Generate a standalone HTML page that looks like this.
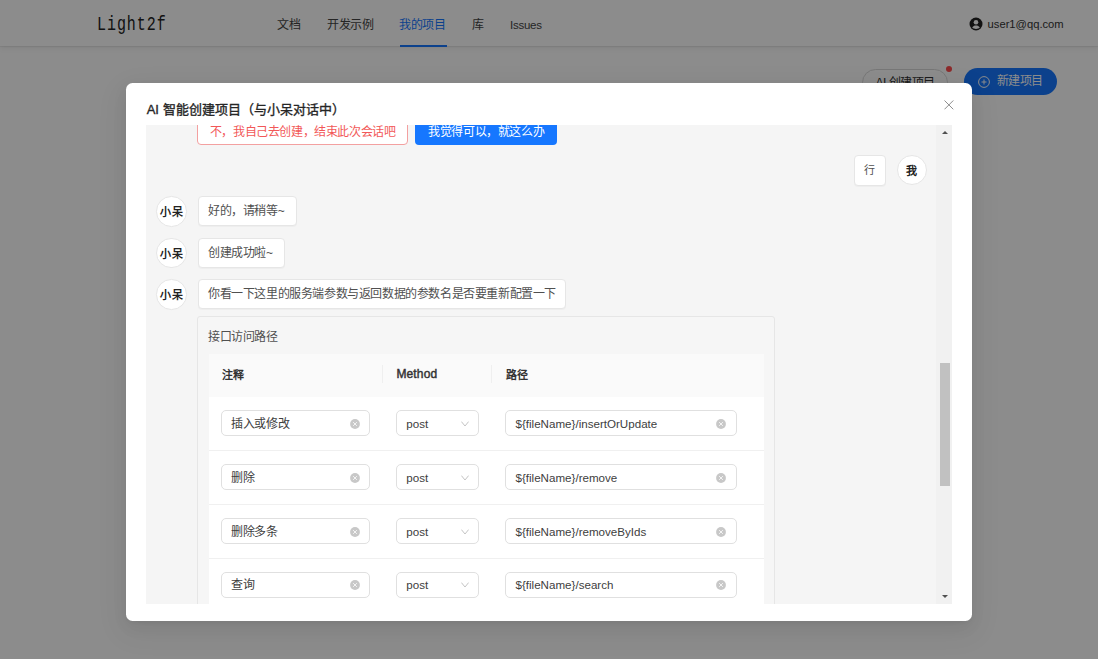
<!DOCTYPE html>
<html lang="zh-CN"><head><meta charset="utf-8">
<style>
*{box-sizing:border-box;margin:0;padding:0}
html,body{width:1098px;height:659px;overflow:hidden}
body{font-family:"Liberation Sans",sans-serif;font-size:12px;color:#333;background:#fff;position:relative}
.abs{position:absolute}
.hdr{left:0;top:0;width:1098px;height:46px;background:#fff;box-shadow:0 1px 1px rgba(0,0,0,0.06),0 2px 6px rgba(0,0,0,0.08)}
.logo{left:97px;top:12px;font-family:"Liberation Mono",monospace;font-size:15px;letter-spacing:0.95px;color:#222;line-height:20px;transform:scaleY(1.36);transform-origin:0 0}
.nav{top:17px;font-size:12px;letter-spacing:-0.4px;line-height:16px;color:#444;white-space:nowrap}
.nav.act{color:#1677ff}
.uline{left:399.6px;top:45.2px;width:47px;height:2px;background:#1677ff}
.user{left:987.6px;top:16px;font-size:11.2px;line-height:16px;color:#333}
.btn-ai{left:862px;top:68.5px;width:86px;height:27px;border:1px solid #d9d9d9;border-radius:14px;background:#fff;font-size:12px;letter-spacing:-0.5px;line-height:26px;text-align:center;color:#333}
.dot{left:946px;top:65.5px;width:6px;height:6px;border-radius:50%;background:#ff4d4f}
.btn-new{left:964px;top:68px;width:92.5px;height:27px;border-radius:14px;background:#1677ff;color:#fff;font-size:12px;line-height:27px}
.mask{left:0;top:0;width:1098px;height:659px;background:rgba(0,0,0,0.45)}
.modal{left:126.2px;top:82.5px;width:845.6px;height:538.4px;background:#fff;border-radius:6.5px;box-shadow:0 6px 16px rgba(0,0,0,0.06),0 3px 6px -4px rgba(0,0,0,0.08),0 9px 28px 8px rgba(0,0,0,0.04)}
.title{left:20.5px;top:17px;font-size:13px;font-weight:normal;-webkit-text-stroke:0.35px #262626;color:#262626;line-height:20px;white-space:nowrap}
.close{left:817.6px;top:17.3px;width:9.8px;height:9.8px}
.body{left:19.8px;top:42.5px;width:806px;height:479px;background:#f5f5f5;overflow:hidden}
.bubble{background:#fff;border:1px solid #e6e6e6;box-shadow:0 1px 1px rgba(0,0,0,0.03);border-radius:4px;font-size:12px;letter-spacing:-0.4px;line-height:28px;padding:0 0 0 9.5px;white-space:nowrap;color:#505050}
.av{background:#fff;border:1px solid #e6e6e6;border-radius:50%;font-weight:bold;font-size:12px;letter-spacing:-0.4px;text-align:center;color:#222;white-space:nowrap}
.btn-red{background:#fff;border:1px solid #f3a0a0;border-radius:4px;color:#f25858;font-size:12px;letter-spacing:-0.4px;line-height:27px;padding-top:0;text-align:center;white-space:nowrap}
.btn-blue{background:#1677ff;border-radius:4px;color:#fff;font-size:12px;letter-spacing:-0.4px;line-height:28px;text-align:center;white-space:nowrap}
.card{background:#f6f6f6;border:1px solid #e6e6e6;border-radius:3px}
.ctitle{font-size:12px;letter-spacing:-0.4px;line-height:16px;color:#505050;white-space:nowrap}
.thead{background:#fafafa}
.th{font-size:12px;letter-spacing:-0.4px;font-weight:bold;line-height:16px;color:#333;white-space:nowrap}
.trow{background:#fff;border-bottom:1px solid #f0f0f0}
.inp{background:#fff;border:1px solid #e0e0e0;border-radius:5px}
.itx{position:absolute;left:9px;top:4.5px;font-size:11.6px;line-height:16px;color:#404040;white-space:nowrap}
.clr{position:absolute;top:7.6px;width:10px;height:10px;line-height:0}
.arr{position:absolute;top:9.6px;width:8px;height:6px;line-height:0}
.cj{font-size:12px;letter-spacing:-0.4px}
.lat{font-size:12px;letter-spacing:0.15px;font-weight:normal;-webkit-text-stroke:0.45px #333}
</style></head><body>
<div class="abs hdr"></div>
<div class="abs logo">Light2f</div>
<div class="abs nav" style="left:277px">文档</div>
<div class="abs nav" style="left:327px">开发示例</div>
<div class="abs nav act" style="left:399px">我的项目</div>
<div class="abs nav" style="left:472px">库</div>
<div class="abs nav" style="left:510px;font-size:11.5px;letter-spacing:-0.25px">Issues</div>
<div class="abs uline"></div>
<svg class="abs" style="left:968.5px;top:16.5px" width="14" height="14" viewBox="0 0 14 14"><circle cx="7" cy="7" r="6.5" fill="#222"/><circle cx="7" cy="5.2" r="2.3" fill="#fff"/><path d="M3.2 10.6C4 9 5.4 8.4 7 8.4S10 9 10.8 10.6C9.8 11.6 8.5 12 7 12S4.2 11.6 3.2 10.6Z" fill="#fff"/></svg>
<div class="abs user">user1@qq.com</div>
<div class="abs btn-ai">AI 创建项目</div>
<div class="abs dot"></div>
<div class="abs btn-new"><svg class="abs" style="left:14px;top:7.5px" width="12" height="12" viewBox="0 0 12 12"><circle cx="6" cy="6" r="5.4" fill="none" stroke="#fff" stroke-width="1"/><path d="M6 3.5V8.5M3.5 6H8.5" stroke="#fff" stroke-width="1"/></svg><span class="abs" style="left:33px;top:0;letter-spacing:-0.6px">新建项目</span></div>

<div class="abs mask"></div>

<div class="abs modal">
  <div class="abs title">AI 智能创建项目（与小呆对话中）</div>
  <svg class="abs close" viewBox="0 0 10 10"><path d="M0.5 0.5L9.5 9.5M9.5 0.5L0.5 9.5" stroke="#8a8a8a" stroke-width="1"/></svg>
  <div class="abs body">
<div class="abs btn-red" style="left:51.3px;top:-7.5px;width:210.7px;height:27px">不，我自己去创建，结束此次会话吧</div>
<div class="abs btn-blue" style="left:269.4px;top:-7.5px;width:141.5px;height:27px">我觉得可以，就这么办</div>
<div class="abs bubble" style="left:708px;top:30px;width:32px;height:30.5px;padding:0;text-align:center;line-height:29.5px;font-size:11px;letter-spacing:0">行</div>
<div class="abs av" style="left:750.6px;top:29.7px;width:30.5px;height:30.5px;line-height:31.5px;font-size:11px;letter-spacing:0">我</div>
<div class="abs av" style="left:10.4px;top:71.4px;width:30.5px;height:30.5px;line-height:30px;font-size:11px;letter-spacing:0.4px;text-indent:0.4px">小呆</div>
<div class="abs bubble" style="left:51.6px;top:71.4px;width:99.5px;height:30px;line-height:29px">好的，请稍等~</div>
<div class="abs av" style="left:10.4px;top:112.7px;width:30.5px;height:30.5px;line-height:30px;font-size:11px;letter-spacing:0.4px;text-indent:0.4px">小呆</div>
<div class="abs bubble" style="left:51.6px;top:112.7px;width:87.6px;height:30px;line-height:29px">创建成功啦~</div>
<div class="abs av" style="left:10.4px;top:154.3px;width:30.5px;height:30.5px;line-height:30px;font-size:11px;letter-spacing:0.4px;text-indent:0.4px">小呆</div>
<div class="abs bubble" style="left:51.6px;top:154.3px;width:368.2px;height:30px;line-height:29px">你看一下这里的服务端参数与返回数据的参数名是否要重新配置一下</div>
<div class="abs card" style="left:51.4px;top:191.4px;width:578.1px;height:320px"></div>
<div class="abs ctitle" style="left:62px;top:203.5px">接口访问路径</div>
<div class="abs thead" style="left:62.6px;top:229px;width:555.7px;height:43.3px"></div>
<div class="abs th" style="left:76px;top:241.5px;font-size:11px;letter-spacing:0.4px">注释</div>
<div class="abs th lat" style="left:250.4px;top:240.8px">Method</div>
<div class="abs th" style="left:359.7px;top:241.5px;font-size:11px;letter-spacing:0.4px">路径</div>
<div class="abs" style="left:236.4px;top:240px;width:1px;height:18px;background:#efefef"></div>
<div class="abs" style="left:345px;top:240px;width:1px;height:18px;background:#efefef"></div>
<div class="abs trow" style="left:62.6px;top:272.3px;width:555.7px;height:53.85px"></div>
<div class="abs inp" style="left:75.2px;top:285.3px;width:149.0px;height:26.2px"><span class="itx cj">插入或修改</span><span class="clr" style="left:127.8px"><svg width="10" height="10" viewBox="0 0 10 10"><circle cx="5" cy="5" r="4.9" fill="#c8c8c8"/><path d="M3.4 3.4L6.6 6.6M6.6 3.4L3.4 6.6" stroke="#f4f4f4" stroke-width="1" stroke-linecap="round"/></svg></span></div>
<div class="abs inp" style="left:250.3px;top:285.3px;width:82.5px;height:26.2px"><span class="itx">post</span><span class="arr" style="left:63.7px"><svg width="8" height="6" viewBox="0 0 8 6"><path d="M0.4 0.6L4 5L7.6 0.6" fill="none" stroke="#c4c4c4" stroke-width="1"/></svg></span></div>
<div class="abs inp" style="left:359.5px;top:285.3px;width:231.3px;height:26.2px"><span class="itx">${fileName}/insertOrUpdate</span><span class="clr" style="left:210.0px"><svg width="10" height="10" viewBox="0 0 10 10"><circle cx="5" cy="5" r="4.9" fill="#c8c8c8"/><path d="M3.4 3.4L6.6 6.6M6.6 3.4L3.4 6.6" stroke="#f4f4f4" stroke-width="1" stroke-linecap="round"/></svg></span></div>
<div class="abs trow" style="left:62.6px;top:326.15px;width:555.7px;height:53.85px"></div>
<div class="abs inp" style="left:75.2px;top:339.15px;width:149.0px;height:26.2px"><span class="itx cj">删除</span><span class="clr" style="left:127.8px"><svg width="10" height="10" viewBox="0 0 10 10"><circle cx="5" cy="5" r="4.9" fill="#c8c8c8"/><path d="M3.4 3.4L6.6 6.6M6.6 3.4L3.4 6.6" stroke="#f4f4f4" stroke-width="1" stroke-linecap="round"/></svg></span></div>
<div class="abs inp" style="left:250.3px;top:339.15px;width:82.5px;height:26.2px"><span class="itx">post</span><span class="arr" style="left:63.7px"><svg width="8" height="6" viewBox="0 0 8 6"><path d="M0.4 0.6L4 5L7.6 0.6" fill="none" stroke="#c4c4c4" stroke-width="1"/></svg></span></div>
<div class="abs inp" style="left:359.5px;top:339.15px;width:231.3px;height:26.2px"><span class="itx">${fileName}/remove</span><span class="clr" style="left:210.0px"><svg width="10" height="10" viewBox="0 0 10 10"><circle cx="5" cy="5" r="4.9" fill="#c8c8c8"/><path d="M3.4 3.4L6.6 6.6M6.6 3.4L3.4 6.6" stroke="#f4f4f4" stroke-width="1" stroke-linecap="round"/></svg></span></div>
<div class="abs trow" style="left:62.6px;top:380.0px;width:555.7px;height:53.85px"></div>
<div class="abs inp" style="left:75.2px;top:393.0px;width:149.0px;height:26.2px"><span class="itx cj">删除多条</span><span class="clr" style="left:127.8px"><svg width="10" height="10" viewBox="0 0 10 10"><circle cx="5" cy="5" r="4.9" fill="#c8c8c8"/><path d="M3.4 3.4L6.6 6.6M6.6 3.4L3.4 6.6" stroke="#f4f4f4" stroke-width="1" stroke-linecap="round"/></svg></span></div>
<div class="abs inp" style="left:250.3px;top:393.0px;width:82.5px;height:26.2px"><span class="itx">post</span><span class="arr" style="left:63.7px"><svg width="8" height="6" viewBox="0 0 8 6"><path d="M0.4 0.6L4 5L7.6 0.6" fill="none" stroke="#c4c4c4" stroke-width="1"/></svg></span></div>
<div class="abs inp" style="left:359.5px;top:393.0px;width:231.3px;height:26.2px"><span class="itx">${fileName}/removeByIds</span><span class="clr" style="left:210.0px"><svg width="10" height="10" viewBox="0 0 10 10"><circle cx="5" cy="5" r="4.9" fill="#c8c8c8"/><path d="M3.4 3.4L6.6 6.6M6.6 3.4L3.4 6.6" stroke="#f4f4f4" stroke-width="1" stroke-linecap="round"/></svg></span></div>
<div class="abs trow" style="left:62.6px;top:433.85px;width:555.7px;height:53.85px"></div>
<div class="abs inp" style="left:75.2px;top:446.85px;width:149.0px;height:26.2px"><span class="itx cj">查询</span><span class="clr" style="left:127.8px"><svg width="10" height="10" viewBox="0 0 10 10"><circle cx="5" cy="5" r="4.9" fill="#c8c8c8"/><path d="M3.4 3.4L6.6 6.6M6.6 3.4L3.4 6.6" stroke="#f4f4f4" stroke-width="1" stroke-linecap="round"/></svg></span></div>
<div class="abs inp" style="left:250.3px;top:446.85px;width:82.5px;height:26.2px"><span class="itx">post</span><span class="arr" style="left:63.7px"><svg width="8" height="6" viewBox="0 0 8 6"><path d="M0.4 0.6L4 5L7.6 0.6" fill="none" stroke="#c4c4c4" stroke-width="1"/></svg></span></div>
<div class="abs inp" style="left:359.5px;top:446.85px;width:231.3px;height:26.2px"><span class="itx">${fileName}/search</span><span class="clr" style="left:210.0px"><svg width="10" height="10" viewBox="0 0 10 10"><circle cx="5" cy="5" r="4.9" fill="#c8c8c8"/><path d="M3.4 3.4L6.6 6.6M6.6 3.4L3.4 6.6" stroke="#f4f4f4" stroke-width="1" stroke-linecap="round"/></svg></span></div>
<div class="abs" style="left:790px;top:0;width:16px;height:480px;background:#f1f1f1"></div>
<div class="abs" style="left:793.6px;top:238.3px;width:10.6px;height:123.2px;background:#c1c1c1"></div>
<div class="abs" style="left:795.6px;top:6.3px;width:0;height:0;border-left:3.2px solid transparent;border-right:3.2px solid transparent;border-bottom:3.8px solid #505050"></div>
<div class="abs" style="left:795.6px;top:469.5px;width:0;height:0;border-left:3.2px solid transparent;border-right:3.2px solid transparent;border-top:3.8px solid #505050"></div>
  </div>
</div>
</body></html>
